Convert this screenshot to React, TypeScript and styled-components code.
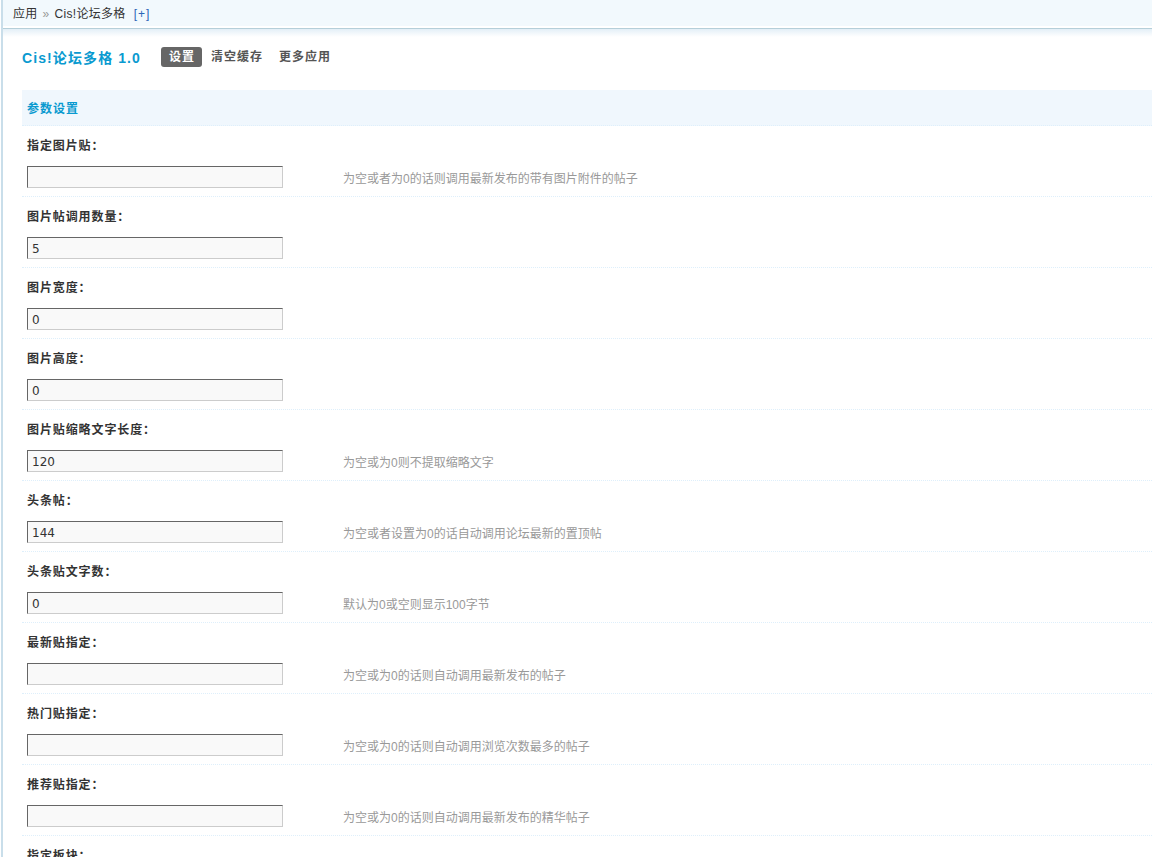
import styled, { createGlobalStyle } from "styled-components";

const GlobalStyle = createGlobalStyle`
  html, body {
    margin: 0;
    padding: 0;
    background: #fff;
  }
  body {
    font: 12px/1.5 "Liberation Sans", "Noto Sans CJK SC", sans-serif;
    color: #333;
  }
`;

const Frame = styled.div`
  margin-left: 1px;
  border-left: 2px solid #c9deea;
  min-height: 100vh;
`;

const TopBar = styled.div`
  height: 24px;
  padding: 2px 0 0 10px;
  line-height: 25px;
  background: #f2f9fd;
  border-bottom: 2px solid #fff;
  color: #333;
  font-size: 12px;
  letter-spacing: 0.3px;
`;

const Raquo = styled.span`
  color: #999;
  margin: 0 5px;
`;

const AddLink = styled.a`
  color: #2b66b8;
  margin-left: 8px;
  text-decoration: none;
  letter-spacing: 1px;
`;

const TopRule = styled.div`
  height: 8px;
  border-top: 1px solid #b5cfd9;
  background: linear-gradient(#e3eff7, #fff);
`;

const Content = styled.div`
  margin-left: 19px;
`;

const TitleBar = styled.div`
  display: flex;
  align-items: center;
  height: 20px;
  margin-top: 10px;
`;

const Title = styled.h3`
  margin: 0 20px 0 0;
  padding-top: 2px;
  font-size: 14px;
  font-weight: 700;
  color: #0a9ad0;
  letter-spacing: 1.1px;
  white-space: nowrap;
`;

const Tabs = styled.ul`
  display: flex;
  gap: 1px;
  margin: 0;
  padding: 0;
  list-style: none;
`;

const Tab = styled.li<{ $active?: boolean }>`
  height: 20px;
  line-height: 21px;
  padding: 0 7px 0 8px;
  border-radius: 3px;
  font-weight: 700;
  letter-spacing: 1px;
  color: ${(p) => (p.$active ? "#fff" : "#555")};
  background: ${(p) => (p.$active ? "#666" : "transparent")};
  cursor: pointer;
`;

const SectionHead = styled.div`
  margin-top: 23px;
  height: 31px;
  padding: 4px 0 0 5px;
  line-height: 31px;
  background: #f0f7fd;
  border-bottom: 1px dotted #deeffb;
  color: #0a9ad0;
  font-weight: 700;
  font-size: 12px;
  letter-spacing: 1px;
`;

const Row = styled.div`
  padding: 9px 0 8px 5px;
  border-bottom: 1px dotted #deeffb;
`;

const Label = styled.div`
  height: 20px;
  line-height: 22px;
  font-weight: 700;
  color: #333;
  letter-spacing: 0.9px;
`;

const Field = styled.div`
  display: grid;
  grid-template-columns: 316px 1fr;
  align-items: center;
  margin-top: 11px;
`;

const TextInput = styled.input`
  box-sizing: border-box;
  width: 256px;
  height: 22px;
  padding: 1px 4px 0;
  border: 1px solid;
  border-color: #666 #ccc #ccc #666;
  background: #f9f9f9;
  font: 12px "DejaVu Sans", "Noto Sans CJK SC", sans-serif;
  color: #333;
  outline: none;
`;

const Tip = styled.span`
  padding-top: 3px;
  color: #999;
  font-size: 12px;
`;

type Setting = { label: string; value: string; tip?: string };

const settings: Setting[] = [
  { label: "指定图片贴：", value: "", tip: "为空或者为0的话则调用最新发布的带有图片附件的帖子" },
  { label: "图片帖调用数量：", value: "5" },
  { label: "图片宽度：", value: "0" },
  { label: "图片高度：", value: "0" },
  { label: "图片贴缩略文字长度：", value: "120", tip: "为空或为0则不提取缩略文字" },
  { label: "头条帖：", value: "144", tip: "为空或者设置为0的话自动调用论坛最新的置顶帖" },
  { label: "头条贴文字数：", value: "0", tip: "默认为0或空则显示100字节" },
  { label: "最新贴指定：", value: "", tip: "为空或为0的话则自动调用最新发布的帖子" },
  { label: "热门贴指定：", value: "", tip: "为空或为0的话则自动调用浏览次数最多的帖子" },
  { label: "推荐贴指定：", value: "", tip: "为空或为0的话则自动调用最新发布的精华帖子" },
  { label: "指定板块：", value: "", tip: "为空或为0的话则调用全部板块" },
];

const App = () => {
  return (
    <>
      <GlobalStyle />
      <Frame>
        <TopBar>
          应用<Raquo>»</Raquo>Cis!论坛多格
          <AddLink href="#">[+]</AddLink>
        </TopBar>
        <TopRule />
        <Content>
          <TitleBar>
            <Title>Cis!论坛多格 1.0</Title>
            <Tabs>
              <Tab $active>设置</Tab>
              <Tab>清空缓存</Tab>
              <Tab>更多应用</Tab>
            </Tabs>
          </TitleBar>
          <SectionHead>参数设置</SectionHead>
          {settings.map((s) => (
            <Row key={s.label}>
              <Label>{s.label}</Label>
              <Field>
                <TextInput type="text" defaultValue={s.value} />
                <Tip>{s.tip}</Tip>
              </Field>
            </Row>
          ))}
        </Content>
      </Frame>
    </>
  );
};

export default App;
